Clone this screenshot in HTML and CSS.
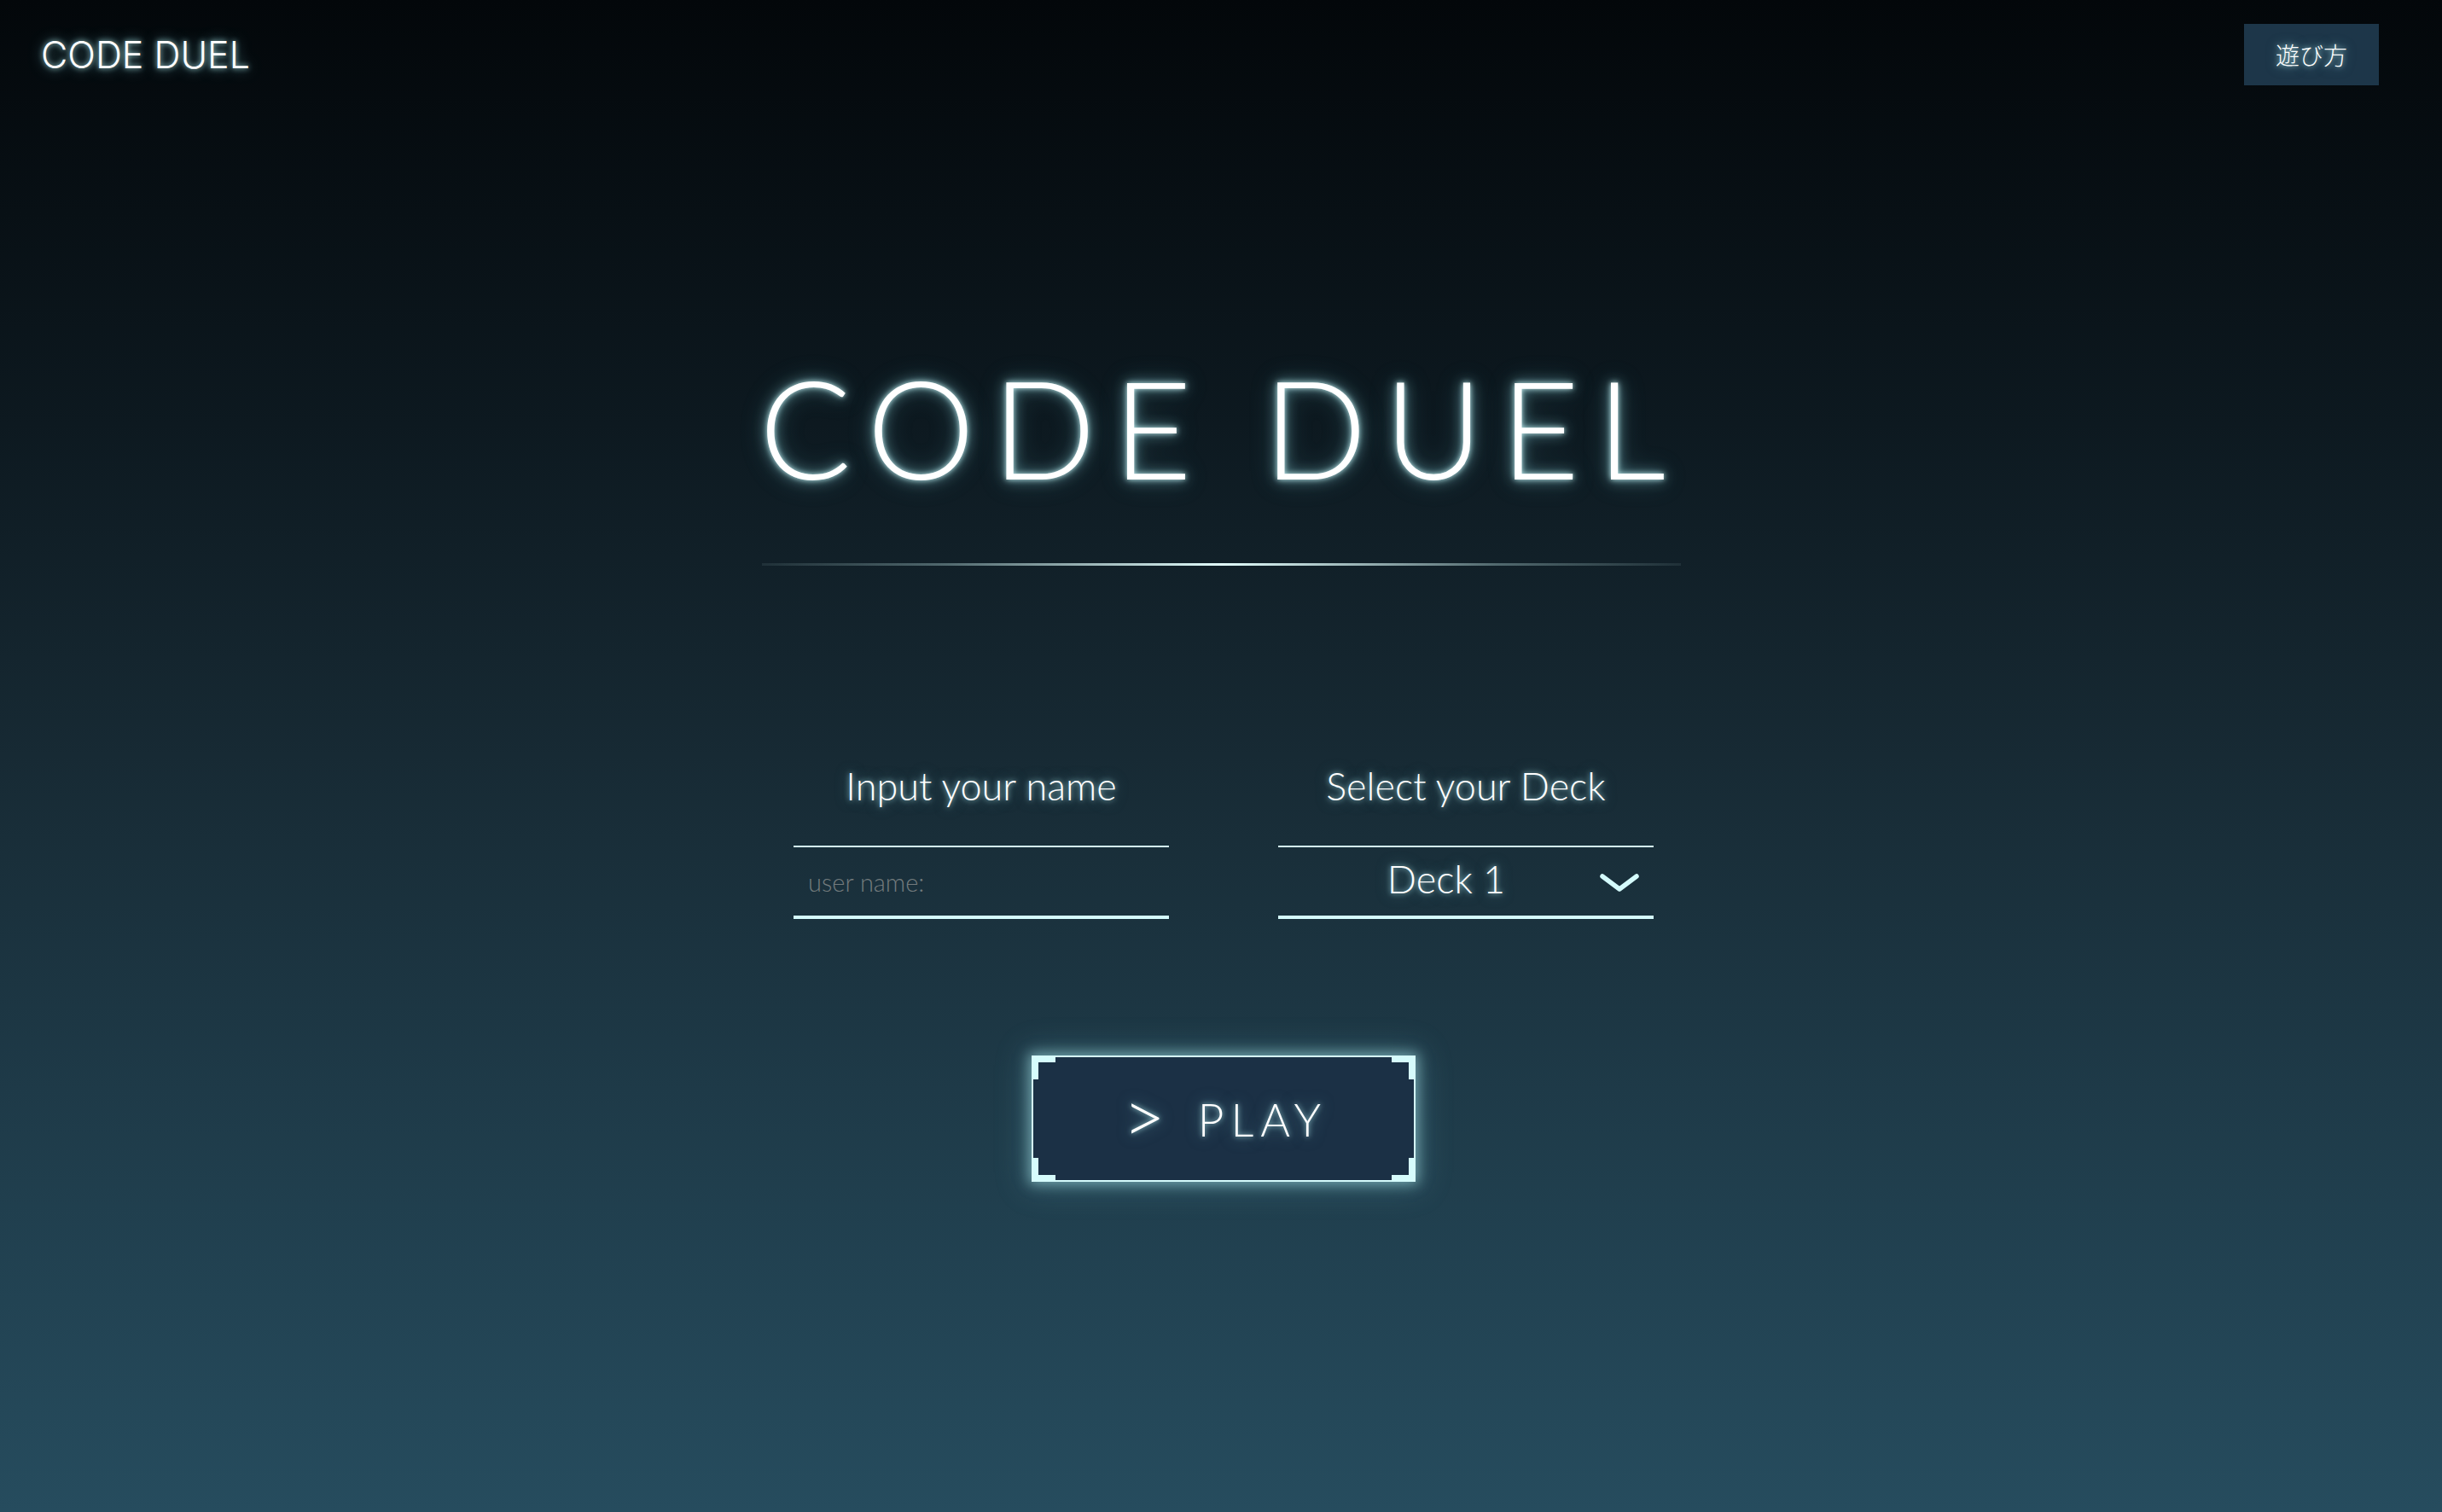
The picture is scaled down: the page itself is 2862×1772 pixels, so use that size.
FILE: index.html
```html
<!DOCTYPE html>
<html lang="ja">
<head>
<meta charset="utf-8">
<title>CODE DUEL</title>
<link rel="stylesheet" href="styles.css">
</head>
<body>
<div class="page">
  <header class="topbar">
    <div class="brand">CODE DUEL</div>
    <button class="howto">遊び方</button>
  </header>
  <main class="main">
    <div class="hero">
      <h1 class="title">CODE DUEL</h1>
      <div class="rule"></div>
    </div>
    <div class="fields">
      <div class="field">
        <div class="label">Input your name</div>
        <div class="box">
          <input class="name-input" type="text" placeholder="user name:">
        </div>
      </div>
      <div class="field">
        <div class="label">Select your Deck</div>
        <div class="box deck">
          <span class="deck-value">Deck 1</span>
          <svg class="chev" width="46" height="24" viewBox="0 0 46 24"><path d="M3 5 L23 20 L43 5" fill="none" stroke="#d4fbfc" stroke-width="5.5" stroke-linecap="round" stroke-linejoin="round"/></svg>
        </div>
      </div>
    </div>
    <button class="play"><span class="gt">&gt;</span><span class="play-text">PLAY</span></button>
  </main>
</div>
</body>
</html>
```
FILE: styles.css
```css
html, body {
  margin: 0;
  padding: 0;
}
body {
  min-height: 100vh;
  background: linear-gradient(to bottom, #03070a 0%, #0d1920 28%, #172a34 50%, #1e3a48 72%, #264c5e 100%);
  color: #ffffff;
  font-family: "Lato", "Noto Sans", sans-serif;
}
.page {
  min-height: 100vh;
  display: flex;
  flex-direction: column;
}
.topbar {
  display: flex;
  justify-content: space-between;
  align-items: center;
  padding: 28px 74px 0 48px;
  height: 72px;
}
.brand {
  font-family: "Inter", "Liberation Sans", sans-serif;
  font-weight: 300;
  font-size: 43px;
  line-height: 1;
  color: #ffffff;
  text-shadow: 0 0 6px rgba(170, 225, 230, 0.95), 0 0 16px rgba(120, 190, 200, 0.7);
}
.howto {
  width: 158px;
  height: 72px;
  border: none;
  background: #1d3649;
  color: #ffffff;
  font-family: "Noto Sans CJK JP", "Noto Sans", sans-serif;
  font-weight: 300;
  font-size: 28px;
  padding: 0;
  text-shadow: 0 0 6px rgba(170, 225, 230, 0.9), 0 0 14px rgba(120, 190, 200, 0.6);
}
.main {
  display: flex;
  flex-direction: column;
  align-items: center;
}
.hero {
  margin-top: 320px;
  width: 1077px;
  display: flex;
  flex-direction: column;
  align-items: center;
}
.title {
  margin: 0;
  font-family: "Lato", sans-serif;
  font-weight: 300;
  font-size: 160px;
  line-height: 1;
  letter-spacing: 20px;
  color: #ffffff;
  white-space: nowrap;
  text-shadow: 0 0 6px rgba(200, 245, 248, 0.95), 0 0 16px rgba(140, 210, 218, 0.7), 0 0 30px rgba(100, 170, 180, 0.4);
}
.rule {
  margin-top: 80px;
  width: 100%;
  height: 3px;
  background: linear-gradient(90deg, rgba(200, 240, 240, 0.08) 0%, rgba(200, 240, 240, 0.35) 20%, #e2fdfc 50%, rgba(200, 240, 240, 0.35) 80%, rgba(200, 240, 240, 0.08) 100%);
}
.fields {
  margin-top: 236px;
  display: flex;
  gap: 128px;
  margin-left: 6px;
}
.field {
  width: 440px;
  display: flex;
  flex-direction: column;
  align-items: center;
}
.label {
  font-size: 45px;
  font-weight: 300;
  line-height: 1;
  color: #ffffff;
  text-shadow: 0 0 6px rgba(170, 225, 230, 0.85), 0 0 16px rgba(120, 190, 200, 0.5);
}
.box {
  margin-top: 47px;
  width: 406px;
  height: 80px;
  border-top: 2px solid #d4fbfc;
  border-bottom: 4px solid #d4fbfc;
  display: flex;
  align-items: center;
  padding: 0 17px;
}
.name-input {
  width: 100%;
  background: transparent;
  border: none;
  outline: none;
  color: #ffffff;
  font-family: "Lato", sans-serif;
  font-weight: 300;
  font-size: 29px;
  padding: 0;
  margin-top: 0;
}
.name-input::placeholder {
  color: #737b7d;
}
.deck-value {
  flex: 1;
  text-align: center;
  font-size: 45px;
  font-weight: 300;
  line-height: 1;
  padding-bottom: 6px;
  color: #ffffff;
  text-shadow: 0 0 6px rgba(170, 225, 230, 0.85), 0 0 16px rgba(120, 190, 200, 0.5);
}
.chev {
  display: block;
  margin-top: 2px;
}
.play {
  margin-top: 160px;
  margin-left: 6px;
  width: 450px;
  height: 148px;
  box-sizing: border-box;
  border: 2px solid #d6fcfc;
  background-color: #1b3045;
  background-image:
    linear-gradient(#d6fcfc, #d6fcfc), linear-gradient(#d6fcfc, #d6fcfc),
    linear-gradient(#d6fcfc, #d6fcfc), linear-gradient(#d6fcfc, #d6fcfc),
    linear-gradient(#d6fcfc, #d6fcfc), linear-gradient(#d6fcfc, #d6fcfc),
    linear-gradient(#d6fcfc, #d6fcfc), linear-gradient(#d6fcfc, #d6fcfc);
  background-size:
    28px 8px, 8px 28px,
    28px 8px, 8px 28px,
    28px 8px, 8px 28px,
    28px 8px, 8px 28px;
  background-position:
    left top, left top,
    right top, right top,
    left bottom, left bottom,
    right bottom, right bottom;
  background-repeat: no-repeat;
  background-origin: border-box;
  box-shadow: 0 0 14px 3px rgba(170, 230, 235, 0.55), 0 0 34px 6px rgba(110, 180, 190, 0.3);
  display: flex;
  align-items: center;
  justify-content: center;
  gap: 38px;
  padding: 0 4px 0 0;
  color: #ffffff;
  font-family: "Lato", sans-serif;
  font-weight: 300;
  text-shadow: 0 0 6px rgba(170, 225, 230, 0.9), 0 0 18px rgba(120, 190, 200, 0.55);
}
.gt {
  font-size: 86px;
  line-height: 1;
  margin-top: -8px;
}
.play-text {
  font-size: 53px;
  line-height: 1;
  letter-spacing: 8px;
  margin-right: -8px;
}
```
